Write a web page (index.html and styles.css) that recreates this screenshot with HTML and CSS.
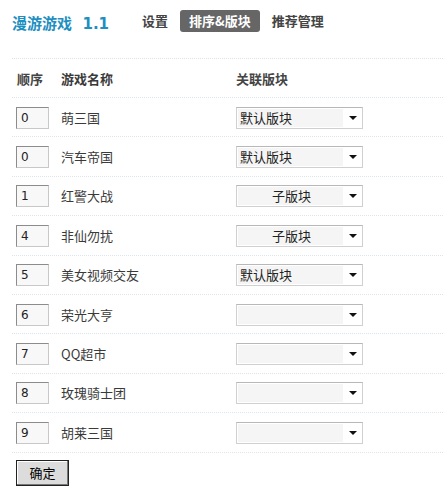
FILE: index.html
```html
<!DOCTYPE html>
<html>
<head>
<meta charset="utf-8">
<link rel="stylesheet" href="styles.css">
</head>
<body>
<div class="page">
  <div class="topbar">
    <div class="title">漫游游戏&nbsp; 1.1</div>
    <nav class="nav">
      <span class="nav-item">设置</span>
      <span class="nav-item active">排序&amp;版块</span>
      <span class="nav-item">推荐管理</span>
    </nav>
  </div>
  <div class="table">
    <div class="row head">
      <div class="c-order">顺序</div>
      <div class="c-name">游戏名称</div>
      <div class="c-sel">关联版块</div>
    </div>
    <div class="row"><div class="c-order"><span class="num">0</span></div><div class="c-name">萌三国</div><div class="c-sel"><span class="select"><span class="val">默认版块</span><span class="arrow"></span></span></div></div>
    <div class="row"><div class="c-order"><span class="num">0</span></div><div class="c-name">汽车帝国</div><div class="c-sel"><span class="select"><span class="val">默认版块</span><span class="arrow"></span></span></div></div>
    <div class="row"><div class="c-order"><span class="num">1</span></div><div class="c-name">红警大战</div><div class="c-sel"><span class="select"><span class="val center">子版块</span><span class="arrow"></span></span></div></div>
    <div class="row"><div class="c-order"><span class="num">4</span></div><div class="c-name">非仙勿扰</div><div class="c-sel"><span class="select"><span class="val center">子版块</span><span class="arrow"></span></span></div></div>
    <div class="row"><div class="c-order"><span class="num">5</span></div><div class="c-name">美女视频交友</div><div class="c-sel"><span class="select"><span class="val">默认版块</span><span class="arrow"></span></span></div></div>
    <div class="row"><div class="c-order"><span class="num">6</span></div><div class="c-name">荣光大亨</div><div class="c-sel"><span class="select"><span class="val"></span><span class="arrow"></span></span></div></div>
    <div class="row"><div class="c-order"><span class="num">7</span></div><div class="c-name">QQ超市</div><div class="c-sel"><span class="select"><span class="val"></span><span class="arrow"></span></span></div></div>
    <div class="row"><div class="c-order"><span class="num">8</span></div><div class="c-name">玫瑰骑士团</div><div class="c-sel"><span class="select"><span class="val"></span><span class="arrow"></span></span></div></div>
    <div class="row last"><div class="c-order"><span class="num">9</span></div><div class="c-name">胡莱三国</div><div class="c-sel"><span class="select"><span class="val"></span><span class="arrow"></span></span></div></div>
  </div>
  <div class="actions"><span class="btn">确定</span></div>
</div>
</body>
</html>
```

FILE: styles.css
```css
html, body {
  margin: 0;
  padding: 0;
  background: #fff;
}
body {
  font-family: "Noto Sans CJK SC", "DejaVu Sans", sans-serif;
  font-size: 12px;
  color: #333;
}
.page {
  padding-left: 12px;
}
.topbar {
  display: flex;
  align-items: center;
  height: 42px;
  padding-bottom: 16px;
}
.title {
  font-family: "DejaVu Sans", "Noto Sans CJK SC", sans-serif;
  font-weight: bold;
  font-size: 15px;
  color: #1e8fc0;
  width: 125px;
  padding-top: 2px;
}
.nav {
  display: flex;
  align-items: center;
  gap: 0;
}
.nav-item {
  font-weight: bold;
  font-size: 13px;
  color: #444;
  line-height: 22px;
  padding: 0 5px;
  margin-right: 2px;
}
.nav-item.active {
  background: #666;
  color: #fff;
  border-radius: 3px;
  padding: 0 9px;
  margin: 0 7px 0 5px;
}
.table {
  border-top: 1px dotted #dfe4ea;
}
.row {
  display: flex;
  align-items: center;
  height: 38.4px;
  border-bottom: 1px dotted #dfe4ea;
}
.row.head {
  height: 38px;
  font-weight: bold;
  font-size: 13px;
  color: #444;
}
.c-order {
  width: 49px;
  padding-left: 4px;
  box-sizing: border-box;
}
.head .c-order { padding-left: 5px; }
.c-name {
  width: 175px;
  font-size: 13px;
  color: #3a3a3a;
}
.c-sel {
  flex: 1;
}
.num {
  display: block;
  width: 33px;
  height: 22px;
  box-sizing: border-box;
  border: 1px solid #c8c8c8;
  border-top-color: #8c8c8c;
  border-left-color: #8c8c8c;
  background: #f8f8f8;
  font-family: "DejaVu Sans", sans-serif;
  font-size: 12px;
  line-height: 20px;
  padding-left: 4px;
  color: #222;
  margin-top: 1px;
}
.select {
  display: flex;
  align-items: center;
  width: 127px;
  height: 22px;
  box-sizing: border-box;
  border: 1px solid #d0d0d0;
  border-top-color: #b8b8b8;
  background: #fff;
  margin-top: 1px;
}
.val {
  width: 105px;
  height: 18px;
  margin-left: 1px;
  background: #f5f5f5;
  font-size: 13px;
  line-height: 18px;
  color: #222;
  padding-left: 2px;
  box-sizing: border-box;
}
.val.center {
  text-align: center;
}
.arrow {
  width: 0;
  height: 0;
  border-left: 4px solid transparent;
  border-right: 4px solid transparent;
  border-top: 4px solid #111;
  margin-left: 6px;
}
.actions {
  padding: 7px 0 0 4px;
}
.btn {
  display: inline-block;
  width: 53px;
  height: 26px;
  box-sizing: border-box;
  border: 1px solid #222;
  box-shadow: inset -1px -1px 0 #777, inset 1px 1px 0 #fff;
  background: #dcdcdc;
  text-align: center;
  font-size: 13px;
  line-height: 24px;
  color: #000;
}
```
